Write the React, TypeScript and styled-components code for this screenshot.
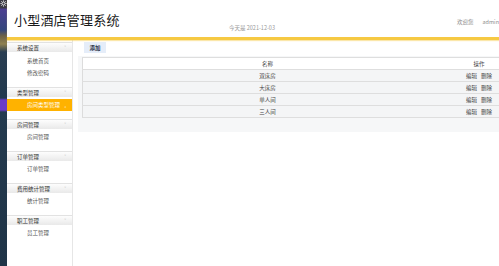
import styled, { createGlobalStyle } from 'styled-components'

const GlobalStyle = createGlobalStyle`
  html, body { margin: 0; padding: 0; background: #fff; }
  body { font-family: "Noto Sans CJK SC", "Noto Sans", sans-serif; color: #333; }
`

const Page = styled.div`
  width: 499px;
  height: 266px;
  display: flex;
  overflow: hidden;
`

const Strip = styled.div`
  width: 7px;
  flex: none;
  position: relative;
  overflow: hidden;
  background: linear-gradient(
    to bottom,
    #3a3a44 0px, #3a3a44 8px,
    #4b3f92 9px, #33467c 30px,
    #6d6247 36px, #8f8150 44px,
    #2a3e52 52px, #233a4e 98px,
    #6b3bc6 100px, #6b3bc6 110px,
    #233a4e 112px, #1f3447 266px
  );
`

const GearIcon = styled.svg`
  position: absolute;
  top: 0;
  left: 0;
  width: 7px;
  height: 7px;
`

const Main = styled.div`
  flex: 1;
  display: flex;
  flex-direction: column;
  min-width: 0;
`

const Header = styled.header`
  height: 37px;
  display: flex;
  align-items: flex-end;
  padding-left: 7px;
  position: relative;
  border-bottom: 3px solid #f6c942;
  box-shadow: 0 1px 1px rgba(246, 201, 66, 0.45);
`

const Title = styled.h1`
  margin: 0 0 9px;
  font-size: 13px;
  font-weight: 400;
  color: #1a1a1a;
  letter-spacing: 0.2px;
  line-height: 16px;
`

const DateText = styled.div`
  position: absolute;
  left: 222px;
  top: 24px;
  font-size: 5.5px;
  color: #9a9a9a;
`

const Welcome = styled.div`
  position: absolute;
  left: 450px;
  top: 18px;
  font-size: 5.5px;
  color: #8a8a8a;
  white-space: nowrap;
  display: flex;
  gap: 9px;
`

const Body = styled.div`
  flex: 1;
  display: flex;
`

const Sidebar = styled.nav`
  width: 65px;
  flex: none;
  border-right: 1px solid #e6e6e6;
  padding-top: 2px;
`

const Group = styled.div`
  padding-bottom: 8px;
`

const GroupHead = styled.div`
  height: 10px;
  display: flex;
  align-items: center;
  justify-content: space-between;
  padding: 0 6px 0 10px;
  border-top: 1px solid #e2e2e2;
  background: linear-gradient(to bottom, #fdfdfd, #e9e9e9);
  font-size: 5.5px;
  color: #333;
  box-sizing: border-box;
`

const Caret = styled.span<{ $light?: boolean }>`
  font-size: 5px;
  color: ${p => (p.$light ? '#fff' : '#aaa')};
`

const Items = styled.div<{ $roomy?: boolean }>`
  padding-top: ${p => (p.$roomy ? '3px' : '2px')};
`

const Item = styled.div<{ $active?: boolean }>`
  height: 12px;
  display: flex;
  align-items: center;
  justify-content: space-between;
  padding: 0 6px 0 20px;
  font-size: 5.5px;
  color: ${p => (p.$active ? '#fff' : '#555')};
  background: ${p => (p.$active ? '#ffb200' : 'transparent')};
`

const Content = styled.section`
  flex: 1;
  padding: 2px 0 0 5px;
  min-width: 0;
`

const AddButton = styled.button`
  display: block;
  margin-left: 6px;
  height: 11px;
  width: 22px;
  padding: 0;
  border: none;
  background: #e5edf9;
  font-family: inherit;
  font-size: 5.5px;
  font-weight: 700;
  color: #2b3548;
  cursor: pointer;
`

const Panel = styled.div`
  margin-top: 3px;
  width: 440px;
  padding: 1px 0 14px 4px;
  background: #f6f7f8;
`

const Table = styled.table`
  width: 424px;
  border-collapse: collapse;
  border-left: 1px solid #dcdcdc;
  font-size: 5.5px;
  color: #444;
`

const Row = styled.tr<{ $head?: boolean }>`
  height: 12px;
  background: ${p => (p.$head ? '#fff' : '#f4f5f6')};
  border-top: 1px solid #dedede;
  border-bottom: 1px solid #dedede;
`

const Cell = styled.td<{ $op?: boolean }>`
  padding: 0;
  text-align: center;
  width: ${p => (p.$op ? '54px' : 'auto')};
`

const Action = styled.a`
  color: #444;
  text-decoration: none;
  margin: 0 2px;
`

const groups = [
  { title: '系统设置', items: ['系统首页', '修改密码'] },
  { title: '类型管理', items: ['房间类型管理'], active: 0 },
  { title: '房间管理', items: ['房间管理'] },
  { title: '订单管理', items: ['订单管理'] },
  { title: '费用统计管理', items: ['统计管理'] },
  { title: '职工管理', items: ['员工管理'] },
]

const rooms = ['双床房', '大床房', '单人间', '三人间']

export default function App() {
  return (
    <>
      <GlobalStyle />
      <Page>
        <Strip>
          <GearIcon viewBox="0 0 14 14">
            <g fill="none" stroke="#e8e8e8" strokeWidth="2">
              <circle cx="7" cy="7" r="3" />
              <path d="M7 1v2M7 11v2M1 7h2M11 7h2M2.8 2.8l1.4 1.4M9.8 9.8l1.4 1.4M2.8 11.2l1.4-1.4M9.8 4.2l1.4-1.4" />
            </g>
          </GearIcon>
        </Strip>
        <Main>
          <Header>
            <Title>小型酒店管理系统</Title>
            <DateText>今天是 2021-12-03</DateText>
            <Welcome><span>欢迎您</span><span>admin</span></Welcome>
          </Header>
          <Body>
            <Sidebar>
              {groups.map((g, gi) => (
                <Group key={g.title}>
                  <GroupHead>{g.title}<Caret>˅</Caret></GroupHead>
                  <Items $roomy={gi === 0}>
                    {g.items.map((it, i) => (
                      <Item key={it} $active={g.active === i}>
                        {it}
                        {g.active === i && <Caret $light>›</Caret>}
                      </Item>
                    ))}
                  </Items>
                </Group>
              ))}
            </Sidebar>
            <Content>
              <AddButton>添加</AddButton>
              <Panel>
                <Table>
                  <tbody>
                    <Row $head>
                      <Cell>名称</Cell>
                      <Cell $op>操作</Cell>
                    </Row>
                    {rooms.map(r => (
                      <Row key={r}>
                        <Cell>{r}</Cell>
                        <Cell $op><Action>编辑</Action><Action>删除</Action></Cell>
                      </Row>
                    ))}
                  </tbody>
                </Table>
              </Panel>
            </Content>
          </Body>
        </Main>
      </Page>
    </>
  )
}
